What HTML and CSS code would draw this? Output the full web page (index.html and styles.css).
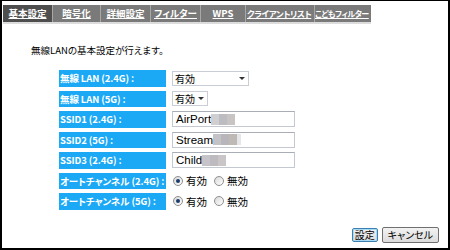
FILE: index.html
```html
<html lang="ja">
<head>
<meta charset="utf-8"/>
<title>基本設定</title>
<link rel="stylesheet" href="styles.css">
</head>
<body>
<div class="frame">
  <div class="tabs">
    <a class="tab active w1">基本設定</a>
    <a class="tab w2">暗号化</a>
    <a class="tab w3">詳細設定</a>
    <a class="tab w4">フィルター</a>
    <a class="tab w5">WPS</a>
    <a class="tab w6">クライアントリスト</a>
    <a class="tab w7">こどもフィルター</a>
  </div>

  <p class="intro">無線LANの基本設定が行えます。</p>

  <div class="settings">
    <div class="label">無線 LAN (2.4G) :</div>
    <div class="value"><div class="select wide">有効<span class="arrow"></span></div></div>

    <div class="label">無線 LAN (5G) :</div>
    <div class="value"><div class="select narrow">有効<span class="arrow"></span></div></div>

    <div class="label">SSID1 (2.4G) :</div>
    <div class="value"><div class="field">AirPort<span class="blur b1"></span></div></div>

    <div class="label">SSID2 (5G) :</div>
    <div class="value"><div class="field">Stream<span class="blur b2"></span></div></div>

    <div class="label">SSID3 (2.4G) :</div>
    <div class="value"><div class="field">Child<span class="blur b3"></span></div></div>

    <div class="label">オートチャンネル (2.4G) :</div>
    <div class="value radios">
      <label><span class="radio on"></span>有効</label>
      <label><span class="radio"></span>無効</label>
    </div>

    <div class="label">オートチャンネル (5G) :</div>
    <div class="value radios">
      <label><span class="radio on"></span>有効</label>
      <label><span class="radio"></span>無効</label>
    </div>
  </div>

  <div class="actions">
    <button class="btn focus">設定</button>
    <button class="btn cancel">キャンセル</button>
  </div>
</div>
</body>
</html>
```

FILE: styles.css
```css
body {
  margin: 0;
  font: 10px "Noto Sans CJK JP", sans-serif;
  font-feature-settings: "palt";
  color: #000;
}
.frame {
  width: 450px;
  height: 250px;
  box-sizing: border-box;
  border: 2px solid #000;
  border-top-width: 1px;
  background: #fff;
  position: relative;
}
.tabs {
  display: flex;
  margin: 4px 0 0 1px;
  width: 368px;
  height: 17px;
  background: #7a7a7a;
  border-bottom: 2px solid #dcdcdc;
  overflow: hidden;
}
.tab {
  color: #fff;
  font-weight: bold;
  font-size: 9.5px;
  line-height: 17px;
  text-align: center;
  text-decoration: underline;
  border-left: 1px solid #a8a8a8;
  box-sizing: border-box;
  white-space: nowrap;
  flex-shrink: 0;
}
.tab.active {
  background: #4e4e4e;
  border-left: none;
}
.w1 { width: 49px; }
.w2 { width: 48px; }
.w3 { width: 50px; }
.w4 { width: 50px; }
.w5 { width: 45px; }
.w6 { width: 69px; text-align: left; padding-left: 1px; font-size: 8.5px; letter-spacing: -0.4px; }
.w7 { width: 57px; text-align: left; font-size: 8px; letter-spacing: -0.5px; }

.intro {
  margin: 19px 0 0 29px;
  font-size: 9.5px;
  line-height: 14px;
}

.settings {
  display: grid;
  grid-template-columns: 107px 1fr;
  grid-auto-rows: 16.5px;
  column-gap: 6px;
  row-gap: 4px;
  margin: 13px 0 0 57px;
}
.label {
  background: #1ba8f5;
  color: #fff;
  font-weight: bold;
  font-size: 9.5px;
  line-height: 16.5px;
  padding-left: 1px;
  letter-spacing: -0.1px;
  white-space: nowrap;
  overflow: hidden;
}
.value {
  display: flex;
  align-items: center;
}
.select {
  height: 15px;
  box-sizing: border-box;
  border: 1px solid #c9ced6;
  background: #fff;
  padding-left: 2px;
  line-height: 13px;
  font-size: 10px;
  position: relative;
}
.select.wide { width: 77px; }
.select.narrow { width: 36px; }
.arrow {
  position: absolute;
  right: 3px;
  top: 5px;
  border-left: 3px solid transparent;
  border-right: 3px solid transparent;
  border-top: 3px solid #333;
}
.field {
  width: 123px;
  height: 16px;
  box-sizing: border-box;
  border: 1px solid #c4c9d1;
  border-top-color: #a9aeb6;
  padding-left: 3px;
  display: flex;
  align-items: center;
  font: 11.5px "Liberation Sans", sans-serif;
}
.blur {
  display: inline-block;
  height: 11px;
  background: linear-gradient(90deg, #cfcfd2 0 8px, #bdbcc0 8px 16px, #c9c4c4 16px 24px);
}
.b1 { width: 24px; }
.b2 { width: 28px; background: linear-gradient(90deg, #c3c3c7 0 8px, #b8b6ba 8px 16px, #bfb9b6 16px 24px, #e4e6ea 24px); }
.b3 { width: 24px; background: linear-gradient(90deg, #c6c4c8 0 8px, #bdbbc0 8px 16px, #cac6c8 16px 24px); }

.radios label {
  display: flex;
  align-items: center;
  width: 41px;
  font-size: 10.5px;
}
.radio {
  width: 8px;
  height: 8px;
  border: 1px solid #8e8f8f;
  border-radius: 50%;
  background: linear-gradient(135deg, #d8d8d8, #fff);
  margin: 0 3px 0 1px;
  position: relative;
}
.radio.on::after {
  content: "";
  position: absolute;
  left: 2px;
  top: 2px;
  width: 4px;
  height: 4px;
  border-radius: 50%;
  background: #1c3c6e;
}

.actions {
  position: absolute;
  right: 9px;
  bottom: 5px;
  display: flex;
  gap: 4px;
  align-items: center;
}
.btn {
  font: 10px "Noto Sans CJK JP", sans-serif;
  font-feature-settings: "palt";
  height: 16px;
  padding: 0 5px;
  line-height: 12px;
  white-space: nowrap;
  border: 1px solid #707070;
  border-radius: 2px;
  background: linear-gradient(#f2f2f2, #dcdcdc);
}
.btn.focus {
  border: 1px solid #3c7fb1;
  box-shadow: inset 0 0 0 1px #a8daf5;
  padding: 0 2px;
  height: 14px;
}
```
